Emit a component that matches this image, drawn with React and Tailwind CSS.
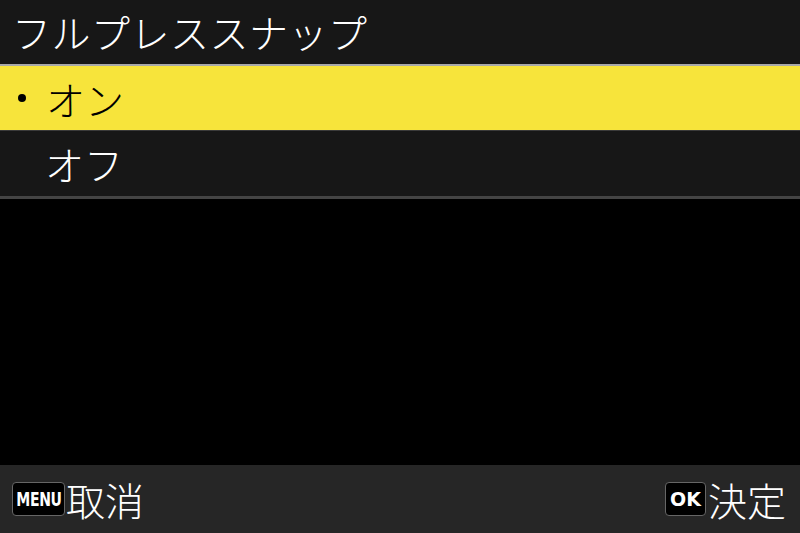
import React from 'react';

const font = { fontFamily: '"Noto Sans CJK JP", "Noto Sans", sans-serif' };

const App = () => (
  <div className="w-[800px] h-[533px] bg-black flex flex-col overflow-hidden" style={font}>
    {/* Title */}
    <div className="h-[64px] bg-[#171717] flex items-center pl-[12px]">
      <span className="text-[39px] leading-none text-white font-light tracking-[0.5px] -mt-[2px]">フルプレススナップ</span>
    </div>
    <div className="h-[2px] bg-[#a9a9a9]" />

    {/* Options */}
    <div className="h-[64px] bg-[#f7e43b] flex items-center">
      <span className="ml-[18px] mr-[20px] w-[8px] h-[8px] rounded-full bg-black" />
      <span className="text-[39px] leading-none text-black font-light">オン</span>
    </div>
    <div className="h-[1px] bg-[#3a3a3a]" />
    <div className="h-[65px] bg-[#171717] flex items-center pl-[45px]">
      <span className="text-[39px] leading-none text-white font-light">オフ</span>
    </div>
    <div className="h-[3px] bg-[#444444]" />

    <div className="flex-1" />

    {/* Footer */}
    <div className="h-[68px] bg-[#262626] flex items-center justify-between pl-[12px] pr-[14px]">
      <div className="flex items-center">
        <span
          className="h-[34px] w-[53px] flex items-center justify-center bg-black border border-[#666] rounded-[4px] text-white leading-none"
        >
          <span
            className="text-[20px] font-bold tracking-[-0.5px] scale-x-[0.78] inline-block"
            style={{ fontFamily: '"DejaVu Sans Condensed", "Liberation Sans Narrow", sans-serif' }}
          >
            MENU
          </span>
        </span>
        <span className="text-[39px] leading-none text-white font-light ml-[1px]">取消</span>
      </div>
      <div className="flex items-center">
        <span
          className="h-[34px] w-[41px] flex items-center justify-center bg-black border border-[#666] rounded-[4px] text-white text-[19px] font-semibold leading-none"
          style={{ fontFamily: '"DejaVu Sans", sans-serif' }}
        >
          OK
        </span>
        <span className="text-[39px] leading-none text-white font-light ml-[2px]">決定</span>
      </div>
    </div>
  </div>
);

export default App;
